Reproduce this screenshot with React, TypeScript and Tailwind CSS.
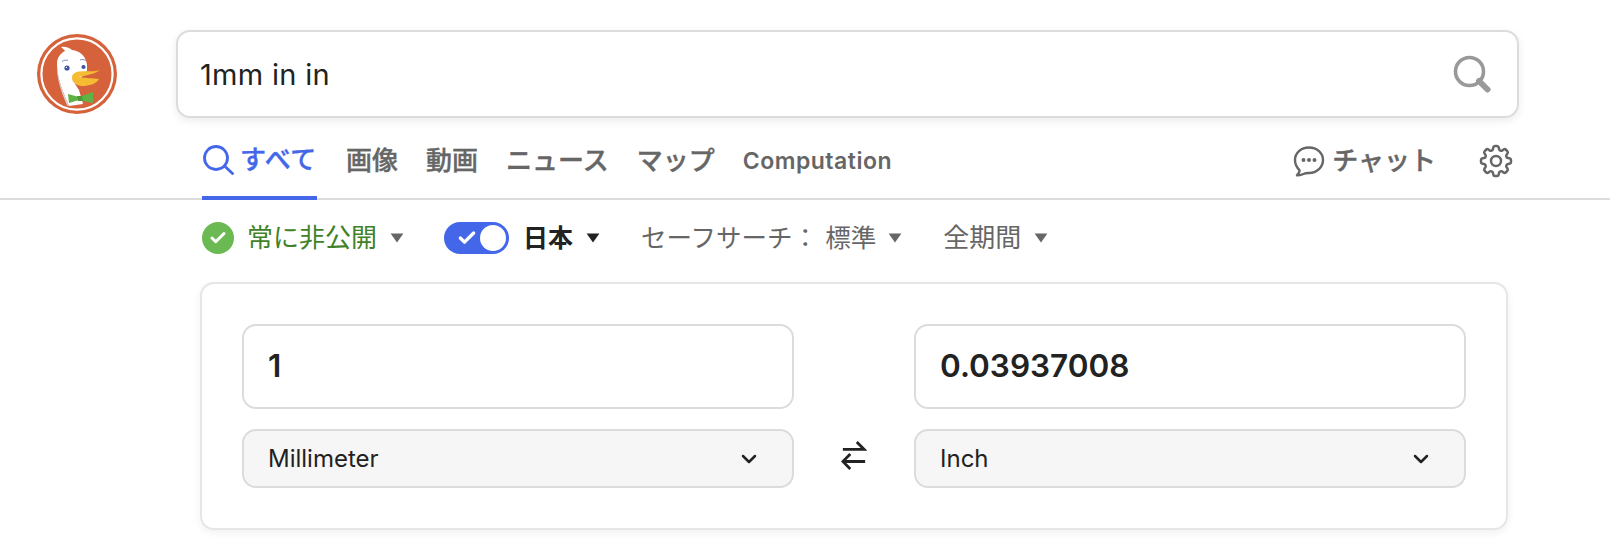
import { ChevronDown, Check } from "lucide-react";
import { HiOutlineCog8Tooth } from "react-icons/hi2";

function Caret({ className }: { className: string }) {
  return (
    <svg viewBox="0 0 14 10" className={`w-[14px] h-[10px] ${className}`} fill="currentColor">
      <path d="M0.6 0.5h12.8L7 9.5z" />
    </svg>
  );
}

function Logo() {
  return (
    <svg viewBox="0 0 80 80" className="w-[80px] h-[80px] shrink-0">
      <circle cx="40" cy="40" r="40" fill="#d5623b" />
      <circle cx="40" cy="40" r="35.6" fill="none" stroke="#fff" strokeWidth="2.2" />
      <path d="M32 72C27 60 20 45 20 30c0-7 4-11 8-13-1-2-3-3-4-4 4-1 9 1 11 3 8 1 14 6 15 15v6L38 50l4 6 4 14z" fill="#fff" />
      <path d="M20 30c0 15 7 30 12 42l-2-.8C25 60 19 44 20 30z" fill="#d8d8d8" />
      <circle cx="30" cy="34" r="2.6" fill="#3f55a0" />
      <circle cx="29.4" cy="33.4" r="0.7" fill="#fff" />
      <circle cx="46.500" cy="33" r="2.1" fill="#3f55a0" />
      <path d="M25 27.500c2-1.500 4-1.700 6-1M43 26c2-.8 4-.6 6 .5" stroke="#6b7fb8" strokeWidth="0.9" fill="none" />
      <path d="M63 36c-5 4-13 5-21 7 8 1.500 14 1 20 2-3 5-10 7-17 7-6 0-10-4-10-8s3-6 7-6.500c8-.5 15 .5 21-1.500z" fill="#f5bb33" />
      <path d="M31 60l11 3 14-5v11l-14-3-10 3z" fill="#5fb346" />
      <path d="M40 62l5 0 1 5-5 0z" fill="#4c9b38" />
    </svg>
  );
}

export default function App() {
  return (
    <div className="w-full h-[554px] bg-white font-['Inter','Noto_Sans_CJK_JP',sans-serif] text-[#222] overflow-hidden">
      <div className="flex items-start pt-[30px] pl-[37px]">
        <div className="pt-[4px]">
          <Logo />
        </div>
        <div className="ml-[59px] w-[1343px] h-[88px] flex items-center justify-between rounded-[14px] border-2 border-[#dcdcdc] bg-white shadow-[0_3px_8px_rgba(0,0,0,0.08)] pl-[22px] pr-[26px]">
          <span className="text-[29px] tracking-[0.3px] leading-none">1mm in in</span>
          <svg viewBox="0 0 38 38" className="w-[38px] h-[38px]" fill="none" stroke="#999">
            <circle cx="16.500" cy="16.500" r="14" strokeWidth="3.6" />
            <path d="M26 26l8.500 8.500" strokeWidth="6" strokeLinecap="round" />
          </svg>
        </div>
      </div>

      <nav className="mt-[14px] h-[68px] flex items-stretch pl-[202px] pr-[98px] border-b-2 border-[#dcdcdc] text-[#666]">
        <div className="-mb-[2px] w-[115px] flex items-center gap-[6px] border-b-4 border-[#4367e8] text-[#4367e8] pb-[8px]">
          <svg viewBox="0 0 32 30" className="w-[32px] h-[30px]" fill="none" stroke="currentColor" strokeWidth="2.800">
            <circle cx="14" cy="13" r="11.500" />
            <path d="M22.500 21l8 7.500" strokeLinecap="round" />
          </svg>
          <span className="text-[26px] font-medium [-webkit-text-stroke:0.4px] tracking-[0.5px] leading-none">すべて</span>
        </div>
        <div className="flex items-center gap-[28px] ml-[29px] pb-[8px] font-medium">
          <span className="text-[26px] [-webkit-text-stroke:0.4px] leading-none">画像</span>
          <span className="text-[26px] [-webkit-text-stroke:0.4px] leading-none">動画</span>
          <span className="text-[26px] [-webkit-text-stroke:0.4px] leading-none">ニュース</span>
          <span className="text-[26px] [-webkit-text-stroke:0.4px] leading-none">マップ</span>
          <span className="text-[23px] font-semibold tracking-[0.5px] leading-none">Computation</span>
        </div>
        <div className="ml-auto flex items-center pb-[8px]">
          <svg viewBox="0 0 32 32" className="w-[32px] h-[32px]" fill="none" stroke="#666" strokeWidth="2.400">
            <path d="M16 2.500c8 0 14 5.500 14 12.500s-6 13-14 13c-2 0-3.500 0-5 .8-2 1-5 1.700-7 1.500 1.500-1.200 2.600-3 2.600-5C3.800 22.500 2 19 2 15 2 8 8 2.500 16 2.500z" strokeLinejoin="round" />
            <circle cx="10.500" cy="15" r="2" fill="#666" stroke="none" />
            <circle cx="16" cy="15" r="2" fill="#666" stroke="none" />
            <circle cx="21.500" cy="15" r="2" fill="#666" stroke="none" />
          </svg>
          <span className="ml-[7px] text-[26px] font-medium [-webkit-text-stroke:0.4px] leading-none">チャット</span>
          <HiOutlineCog8Tooth className="ml-[40px] w-[40px] h-[40px] -mr-[4px] text-[#666]" />
        </div>
      </nav>

      <div className="mt-[16px] h-[44px] flex items-center pl-[202px] text-[26px] leading-none text-[#666]">
        <span className="w-[32px] h-[32px] rounded-full bg-[#6bb952] flex items-center justify-center">
          <Check className="w-[18px] h-[18px] text-white" strokeWidth={4} />
        </span>
        <span className="ml-[13px] text-[#3f8228]">常に非公開</span>
        <Caret className="ml-[13px] text-[#666]" />
        <div className="ml-[40px] w-[65px] h-[32px] rounded-full bg-[#4367e8] flex items-center justify-between pl-[13px] pr-[3px]">
          <Check className="w-[20px] h-[20px] text-white" strokeWidth={4} />
          <span className="w-[26px] h-[26px] rounded-full bg-white" />
        </div>
        <span className="ml-[14px] text-[25px] font-bold text-[#222]">日本</span>
        <Caret className="ml-[13px] text-[#222]" />
        <span className="ml-[41px] text-[25.500px]">セーフサーチ： 標準</span>
        <Caret className="ml-[12px] text-[#666]" />
        <span className="ml-[41px]">全期間</span>
        <Caret className="ml-[13px] text-[#666]" />
      </div>

      <div className="mt-[22px] ml-[200px] w-[1308px] h-[248px] rounded-[14px] border-2 border-[#e6e6e6] bg-white shadow-[0_3px_8px_rgba(0,0,0,0.06)] px-[40px] pt-[40px]">
        <div className="grid grid-cols-[552px_1fr_552px] grid-rows-[85px_59px] gap-y-[20px]">
          <div className="rounded-[14px] border-2 border-[#dcdcdc] flex items-center px-[24px] pb-[2px] text-[31.500px] font-semibold leading-none">1</div>
          <div />
          <div className="rounded-[14px] border-2 border-[#dcdcdc] flex items-center px-[24px] pb-[2px] text-[31.500px] font-semibold leading-none">0.03937008</div>
          <div className="rounded-[14px] border-2 border-[#dcdcdc] bg-[#f6f6f6] flex items-center justify-between pl-[24px] pr-[31px] text-[24px] leading-none">
            <span>Millimeter</span>
            <ChevronDown className="w-[24px] h-[24px]" strokeWidth={2.500} />
          </div>
          <div className="flex items-center justify-center pb-[8px]">
            <svg viewBox="0 0 28 32" className="w-[26px] h-[30px]" fill="none" stroke="#222" strokeWidth="3">
              <path d="M2 10h23M17 2l8 8-1 0M2 23h24M10 15l-8 8 8 8" />
            </svg>
          </div>
          <div className="rounded-[14px] border-2 border-[#dcdcdc] bg-[#f6f6f6] flex items-center justify-between pl-[24px] pr-[31px] text-[24px] leading-none">
            <span>Inch</span>
            <ChevronDown className="w-[24px] h-[24px]" strokeWidth={2.500} />
          </div>
        </div>
      </div>
    </div>
  );
}
